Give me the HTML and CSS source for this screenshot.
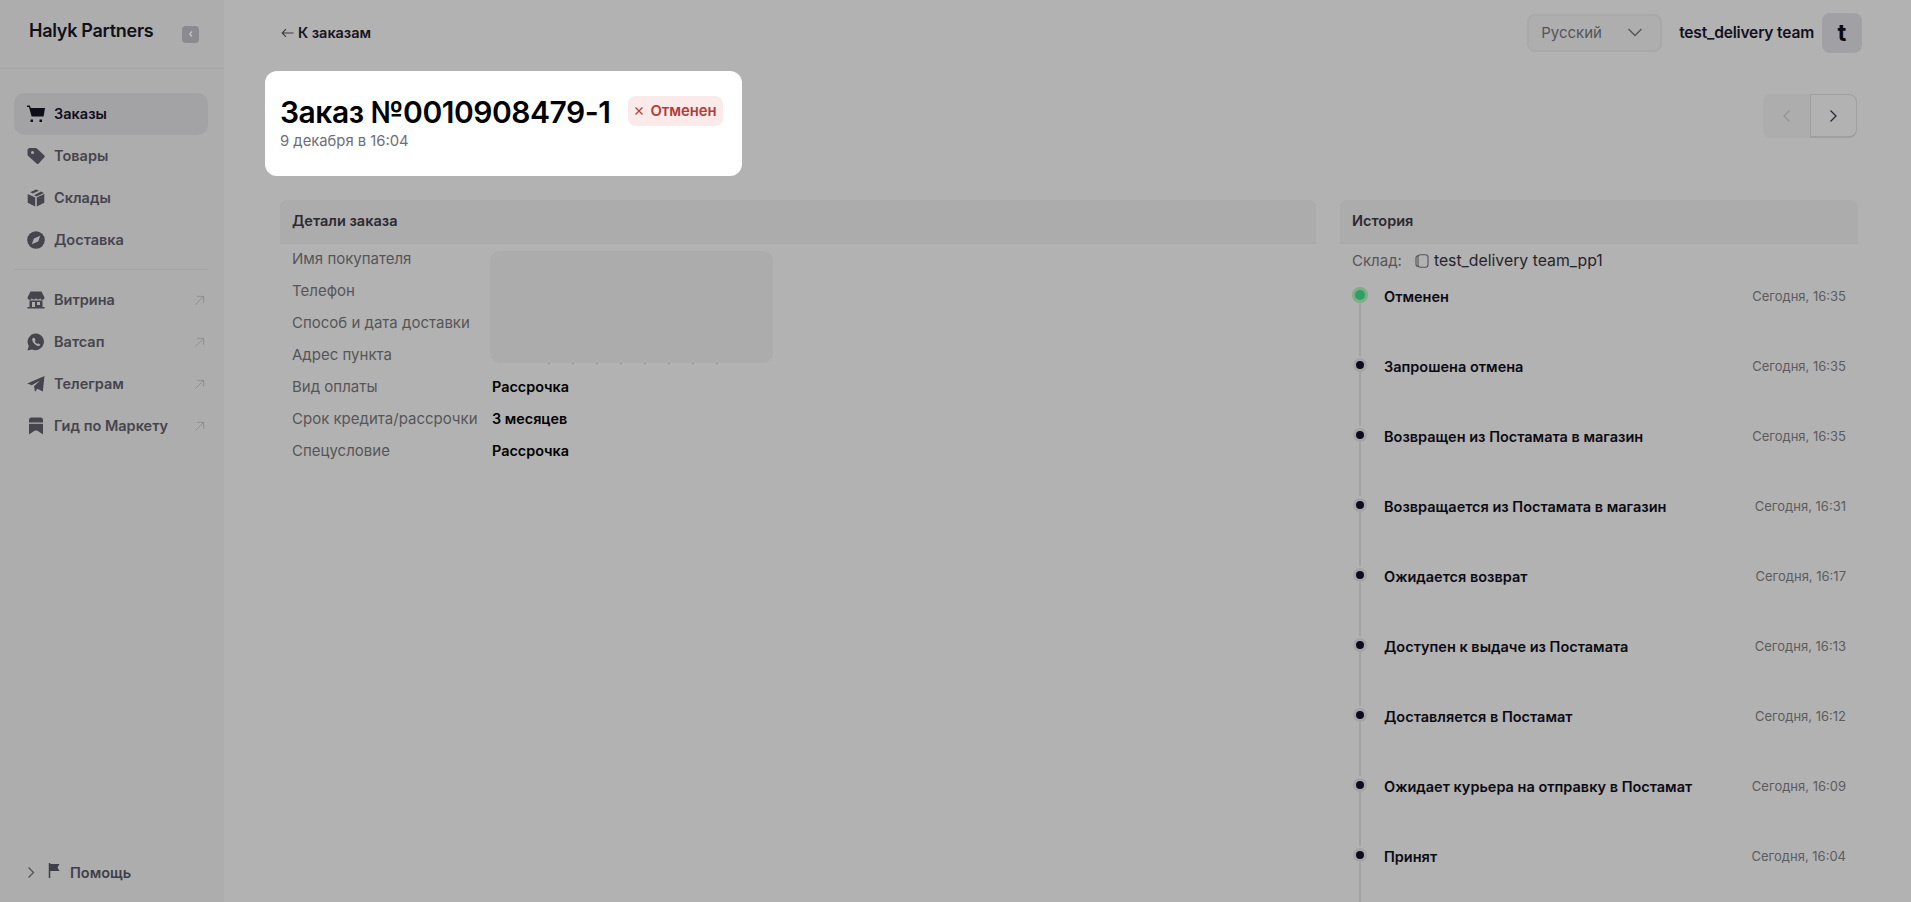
FILE: index.html
```html
<!DOCTYPE html>
<html lang="ru">
<head>
<meta charset="utf-8">
<title>Заказ №0010908479-1</title>
<link rel="stylesheet" href="styles.css">
</head>
<body>
<div class="app">
  <aside class="sidebar">
    <div class="brand">
      <span class="brand-name">Halyk Partners</span>
      <span class="collapse"><svg width="8" height="8" viewBox="0 0 8 8"><path d="M5 1.500 2.800 4 5 6.500" fill="none" stroke="#c4c4c8" stroke-width="1.300"/></svg></span>
    </div>
    <nav class="nav">
      <a class="nav-item active">
        <svg class="nav-icon" viewBox="0 0 18 18"><path d="M0 .5h2.800l1 2.500H18l-1.400 8.500H4.600L2 2.100H0z" fill="currentColor"/><rect x="3.500" y="14.500" width="2.500" height="2.500" fill="currentColor"/><rect x="12.500" y="14.500" width="2.500" height="2.500" fill="currentColor"/></svg>
        <span>Заказы</span>
      </a>
      <a class="nav-item">
        <svg class="nav-icon" viewBox="0 0 18 18"><path d="M.5 3.500A2.500 2.500 0 0 1 3 1h5.500a2 2 0 0 1 1.400.600l7.300 6.700a1.500 1.500 0 0 1 0 2.100l-5.500 6a1.500 1.500 0 0 1-2.100 0L1.200 9A2 2 0 0 1 .5 7.500z" fill="currentColor"/><circle cx="5.500" cy="5.500" r="1.500" fill="#adadad"/></svg>
        <span>Товары</span>
      </a>
      <a class="nav-item">
        <svg class="nav-icon" viewBox="0 0 18 18"><path d="M9 .5 12 1.700 5.800 4.600 3.200 3.200zM14 2.600l3 1.500-7.500 3.400-2.300-1.200zM.7 5l7.500 3.600v9L.7 13.800zM17.300 5v8.800l-7.500 3.800v-9z" fill="currentColor"/></svg>
        <span>Склады</span>
      </a>
      <a class="nav-item">
        <svg class="nav-icon" viewBox="0 0 18 18"><circle cx="9" cy="9" r="8.800" fill="currentColor"/><path d="M13.200 4.800 11.200 10.400 4.800 13.200 6.900 7.400z" fill="#adadad"/></svg>
        <span>Доставка</span>
      </a>
      <div class="nav-divider"></div>
      <a class="nav-item">
        <svg class="nav-icon" viewBox="0 0 18 18"><path d="M3.500 .5h11L17.500 6.500a2.200 2.200 0 0 1-4.300.8 2.400 2.400 0 0 1-4.200 0 2.400 2.400 0 0 1-4.200 0 2.200 2.200 0 0 1-4.300-.8z" fill="currentColor"/><path d="M2.500 9.500h13V16H17.500v1.500H.500V16h2zM5 11v5h3v-5zm5 0v3h3v-3z" fill="currentColor" fill-rule="evenodd"/></svg>
        <span>Витрина</span>
        <svg class="ext" viewBox="0 0 12 12"><path d="M1.500 10.500 10.500 1.500M3.500 1.500h7v7" fill="none" stroke="currentColor" stroke-width="1"/></svg>
      </a>
      <a class="nav-item">
        <svg class="nav-icon" viewBox="0 0 18 18"><path d="M9 .4a8.400 8.400 0 0 0-7.200 12.700L.4 17.600l4.600-1.200A8.400 8.400 0 1 0 9 .4z" fill="currentColor"/><path d="M6.300 4.800c-.9.500-1.400 1.500-1 2.800.700 2.400 2.800 4.600 5.300 5.300 1.200.300 2.300-.200 2.700-1.200l-2-1.400-1 .800c-1-.500-2-1.500-2.500-2.500l.8-1-1.100-2.500z" fill="#adadad"/></svg>
        <span>Ватсап</span>
        <svg class="ext" viewBox="0 0 12 12"><path d="M1.500 10.500 10.500 1.500M3.500 1.500h7v7" fill="none" stroke="currentColor" stroke-width="1"/></svg>
      </a>
      <a class="nav-item">
        <svg class="nav-icon" viewBox="0 0 18 18"><path d="M17.500 1 15.800 16.500l-5.300-2.700-2.500 3-1-5.500L13 5.500 4.800 10.300.200 8.500z" fill="currentColor"/></svg>
        <span>Телеграм</span>
        <svg class="ext" viewBox="0 0 12 12"><path d="M1.500 10.500 10.500 1.500M3.500 1.500h7v7" fill="none" stroke="currentColor" stroke-width="1"/></svg>
      </a>
      <a class="nav-item">
        <svg class="nav-icon" viewBox="0 0 18 18"><path d="M4.500 .5h9A2.500 2.500 0 0 1 16 3v14.500l-4-2.800a5 5 0 0 0-6 0L2 17.500V3A2.500 2.500 0 0 1 4.500 .5z" fill="currentColor"/><rect x="2" y="5.500" width="14" height="1.300" fill="#adadad"/></svg>
        <span>Гид по Маркету</span>
        <svg class="ext" viewBox="0 0 12 12"><path d="M1.500 10.500 10.500 1.500M3.500 1.500h7v7" fill="none" stroke="currentColor" stroke-width="1"/></svg>
      </a>
    </nav>
    <div class="help">
      <svg class="help-chevron" width="8" height="13" viewBox="0 0 8 13"><path d="M1.500 1.500 6.500 6.500l-5 5" fill="none" stroke="currentColor" stroke-width="1.400"/></svg>
      <svg class="help-flag" width="12" height="15" viewBox="0 0 12 15"><path d="M1.500 0v15" stroke="currentColor" stroke-width="1.500"/><path d="M2 1h9.500L9.500 4.500l2 3.500H2z" fill="currentColor"/></svg>
      <span>Помощь</span>
    </div>
  </aside>

  <main class="main">
    <header class="topbar">
      <a class="back"><svg width="13" height="10" viewBox="0 0 13 10"><path d="M12.500 5H1.500M5 1.200 1.200 5 5 8.800" fill="none" stroke="currentColor" stroke-width="1.100"/></svg>К заказам</a>
      <div class="account">
        <div class="lang">
          <span>Русский</span>
          <svg width="16" height="9" viewBox="0 0 16 9"><path d="M1.500 1 8 7.500 14.500 1" fill="none" stroke="currentColor" stroke-width="1.400"/></svg>
        </div>
        <span class="user-name">test_delivery team</span>
        <span class="avatar">t</span>
      </div>
    </header>

    <section class="title-row">
      <div class="title-card">
        <div class="title-line">
          <h1>Заказ №0010908479-1</h1>
          <span class="status"><svg width="10" height="10" viewBox="0 0 10 10"><path d="M1.500 1.500l7 7m0-7-7 7" fill="none" stroke="currentColor" stroke-width="1.200"/></svg>Отменен</span>
        </div>
        <div class="title-date">9 декабря в 16:04</div>
      </div>
      <div class="pager">
        <span class="pager-btn prev"><svg width="9" height="14" viewBox="0 0 9 14"><path d="M7.500 1.500 2 7l5.500 5.500" fill="none" stroke="currentColor" stroke-width="1.300"/></svg></span>
        <span class="pager-btn next"><svg width="9" height="14" viewBox="0 0 9 14"><path d="M1.500 1.500 7 7l-5.500 5.500" fill="none" stroke="currentColor" stroke-width="1.300"/></svg></span>
      </div>
    </section>

    <div class="columns">
      <section class="details">
        <h2 class="panel-head">Детали заказа</h2>
        <dl class="details-list">
          <div class="redacted"></div>
          <dt>Имя покупателя</dt><dd></dd>
          <dt>Телефон</dt><dd></dd>
          <dt>Способ и дата доставки</dt><dd></dd>
          <dt>Адрес пункта</dt><dd></dd>
          <dt>Вид оплаты</dt><dd>Рассрочка</dd>
          <dt>Срок кредита/рассрочки</dt><dd>3 месяцев</dd>
          <dt>Спецусловие</dt><dd>Рассрочка</dd>
        </dl>
      </section>

      <section class="history">
        <h2 class="panel-head">История</h2>
        <div class="warehouse">
          <span class="warehouse-label">Склад:</span>
          <svg width="14" height="15" viewBox="0 0 14 15"><rect x="3" y="1.800" width="10" height="12.500" rx="2.500" fill="none" stroke="currentColor" stroke-width="1.100"/><path d="M3 2.800A2 2 0 0 0 1 4.800v6.400a2 2 0 0 0 2 2" fill="none" stroke="currentColor" stroke-width="1.100"/></svg>
          <span class="warehouse-name">test_delivery team_pp1</span>
        </div>
        <ol class="timeline">
          <li class="event current"><span class="track"><i class="dot"></i><i class="line"></i></span><span class="event-name">Отменен</span><time>Сегодня, 16:35</time></li>
          <li class="event"><span class="track"><i class="dot"></i><i class="line"></i></span><span class="event-name">Запрошена отмена</span><time>Сегодня, 16:35</time></li>
          <li class="event"><span class="track"><i class="dot"></i><i class="line"></i></span><span class="event-name">Возвращен из Постамата в магазин</span><time>Сегодня, 16:35</time></li>
          <li class="event"><span class="track"><i class="dot"></i><i class="line"></i></span><span class="event-name">Возвращается из Постамата в магазин</span><time>Сегодня, 16:31</time></li>
          <li class="event"><span class="track"><i class="dot"></i><i class="line"></i></span><span class="event-name">Ожидается возврат</span><time>Сегодня, 16:17</time></li>
          <li class="event"><span class="track"><i class="dot"></i><i class="line"></i></span><span class="event-name">Доступен к выдаче из Постамата</span><time>Сегодня, 16:13</time></li>
          <li class="event"><span class="track"><i class="dot"></i><i class="line"></i></span><span class="event-name">Доставляется в Постамат</span><time>Сегодня, 16:12</time></li>
          <li class="event"><span class="track"><i class="dot"></i><i class="line"></i></span><span class="event-name">Ожидает курьера на отправку в Постамат</span><time>Сегодня, 16:09</time></li>
          <li class="event"><span class="track"><i class="dot"></i><i class="line"></i></span><span class="event-name">Принят</span><time>Сегодня, 16:04</time></li>
        </ol>
      </section>
    </div>
  </main>
</div>
</body>
</html>
```

FILE: styles.css
```css
* { box-sizing: border-box; }
html, body { margin: 0; height: 100%; overflow: hidden; }
body {
  background: #b2b2b2;
  color: #0d0b16;
  font-family: Inter, "Noto Sans", "Liberation Sans", sans-serif;
  font-size: 15px;
}
h1, h2, dl, dd, ol { margin: 0; padding: 0; }
ol { list-style: none; }

.app { display: flex; height: 902px; overflow: hidden; }

/* Sidebar */
.sidebar {
  width: 224px;
  flex: none;
  background: #adadad;
  display: flex;
  flex-direction: column;
}
.brand {
  height: 69px;
  flex: none;
  border-bottom: 1px solid #a6a6a6;
  display: flex;
  align-items: center;
  justify-content: space-between;
  padding: 0 25px 7px 29px;
}
.brand-name { font-size: 18px; font-weight: 600; letter-spacing: -.28px; color: #111019; }
.collapse {
  width: 17px; height: 17px; margin-top: 7px;
  border-radius: 4px;
  background: #8b8b8f;
  display: flex; align-items: center; justify-content: center;
}
.nav { padding: 24px 16px 0 14px; display: flex; flex-direction: column; }
.nav-item {
  height: 42px;
  padding: 0 3px 2px 13px;
  border-radius: 10px;
  display: flex; align-items: center; gap: 9px;
  color: #46454e;
  font-size: 14.5px;
  font-weight: 600;
}
.nav-item .nav-icon { margin-top: 2px; }
.nav-item.active { background: #a3a3a5; color: #0f0d1a; }
.nav-icon { width: 18px; height: 18px; flex: none; }
.ext { width: 11px; height: 11px; margin-left: auto; margin-top: 2px; color: #8d8d8f; }
.nav-divider { height: 1px; background: #a3a3a3; margin: 8px 0 9px; }
.help {
  margin-top: auto;
  padding: 0 0 21px 27px;
  display: flex; align-items: center;
  color: #3f3f48;
  font-size: 14.5px;
  font-weight: 600;
}
.help-chevron { color: #55555b; margin-right: 13px; }
.help-flag { margin-right: 10px; margin-top: -4px; }

/* Main */
.main { flex: 1; min-width: 0; padding: 0 53px 0 56px; }
.topbar {
  height: 66px;
  padding-bottom: 1px;
  display: flex; align-items: center; justify-content: space-between;
}
.back {
  display: flex; align-items: center; gap: 4px;
  font-size: 14.5px; font-weight: 600; color: #16141f;
  letter-spacing: -.05px;
  margin-left: 1px;
}
.back svg { color: #3b3a42; }
.account { display: flex; align-items: center; margin-right: -4px; }
.lang {
  width: 135px; height: 38px;
  border: 2px solid #a9a9a9;
  border-radius: 8px;
  background: #aeaeae;
  display: flex; align-items: center; justify-content: space-between;
  padding: 0 17px 0 12px;
  color: #55555a;
  font-size: 15px;
  margin-right: 17px;
}
.user-name { font-size: 15.6px; font-weight: 600; letter-spacing: -.2px; color: #12101b; margin-right: 8px; }
.avatar {
  width: 40px; height: 40px;
  border-radius: 8px;
  background: #a1a1a5;
  display: flex; align-items: center; justify-content: center;
  font-size: 24px; font-weight: 700; color: #0d0b16;
}

.title-row {
  display: flex; align-items: flex-start; justify-content: space-between;
  margin: 5px 0 0 -15px;
}
.title-card {
  width: 477px; height: 105px;
  padding: 22px 15px 0;
  background: #fff;
  border-radius: 12px;
}
.title-line { display: flex; align-items: center; gap: 18px; }
h1 { font-size: 30px; line-height: 38px; font-weight: 600; color: #000; letter-spacing: -.48px; white-space: nowrap; }
.status {
  height: 30px; padding: 0 6px;
  background: #faeaea;
  border-radius: 8px;
  display: flex; align-items: center; gap: 6px;
  color: #b23b3b;
  font-size: 14.8px; font-weight: 600;
  margin-top: -3px;
}
.title-date { font-size: 14.8px; color: #6e6e78; line-height: 20px; }
.pager { display: flex; margin-top: 23px; margin-right: 1px; }
.pager-btn {
  width: 47px; height: 44px;
  display: flex; align-items: center; justify-content: center;
}
.pager-btn.prev { background: #adadad; color: #929296; border-radius: 8px 0 0 8px; }
.pager-btn.next { border: 1px solid #9f9f9f; border-bottom-width: 2px; border-radius: 0 8px 8px 0; color: #2c2b33; }

.columns { display: grid; grid-template-columns: 1036px 518px; gap: 24px; margin-top: 24px; }
.panel-head {
  height: 44px;
  padding: 0 12px 2px;
  background: #acacac;
  border-bottom: 1px solid #a8a8a8;
  border-radius: 6px 6px 0 0;
  display: flex; align-items: center;
  font-size: 14.5px; font-weight: 600; color: #2b2a31;
}

/* Details */
.details-list {
  position: relative;
  display: grid;
  grid-template-columns: 200px 1fr;
  grid-auto-rows: 32px;
  padding: 0 12px;
  margin-top: -2px;
  align-items: center;
}
.details-list dt { color: #565658; font-size: 15px; white-space: nowrap; }
.details-list dd { font-size: 14.4px; font-weight: 600; color: #000; }
.redacted {
  position: absolute;
  left: 210px; top: 9px;
  width: 283px; height: 112px;
  background: #acacac;
  border-radius: 10px;
}
.redacted::after {
  content: "";
  position: absolute;
  left: 58px; bottom: -1px;
  width: 170px; height: 1px;
  background: repeating-linear-gradient(90deg, #8f8f8f 0 2px, transparent 2px 24px);
}

/* History */
.warehouse {
  height: 32px; padding: 0 12px;
  display: flex; align-items: center;
  color: #26252c;
  font-size: 15px;
}
.warehouse svg { color: #55555a; margin-right: 5px; flex: none; margin-left: -1px; }
.warehouse-label { color: #565658; margin-right: 14px; }
.warehouse-name { font-size: 15.8px; }
.timeline { margin-top: 10px; padding: 0 12px; }
.event {
  height: 70px;
  display: grid;
  grid-template-columns: 32px 1fr auto;
  align-items: start;
}
.track { display: flex; flex-direction: column; align-items: center; width: 16px; height: 70px; }
.dot {
  width: 14px; height: 14px; flex: none;
  margin-top: 2px;
  border-radius: 50%;
  background: #0e0c1c;
  border: 3.5px solid #a5a5a5;
}
.current .dot { width: 16px; height: 16px; margin-top: 1px; background: #2e9e6a; border-color: #7fae85; }
.line { width: 2px; flex: 1; background: #a3a3a3; }
.event-name { font-size: 14.5px; font-weight: 600; color: #0b0a12; line-height: 22px; }
.event time { font-size: 13px; color: #5c5c5e; line-height: 20px; }
```
